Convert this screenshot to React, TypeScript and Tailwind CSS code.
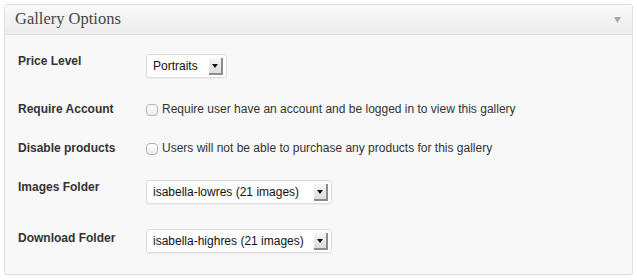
import type { ReactNode } from "react";

const sans = { fontFamily: '"Liberation Sans", Arial, sans-serif' };

function FakeSelect({ value, width }: { value: string; width: string }) {
  return (
    <div
      className={`relative flex h-[24px] items-center rounded-[3px] border border-[#dcdcdc] bg-white pl-[6px] text-[12px] text-[#111] shadow-[0_1px_1px_rgba(0,0,0,0.04)] ${width}`}
    >
      <span className="leading-none">{value}</span>
      <span className="absolute right-[3px] top-[3px] flex h-[17px] w-[14px] items-center justify-center border-b-2 border-r-2 border-b-[#8c8c8c] border-r-[#8c8c8c] bg-gradient-to-b from-[#f6f6f6] to-[#dcdcdc]">
        <svg width="6" height="4" viewBox="0 0 6 4" className="mt-[1px]">
          <path d="M0 0h6L3 4z" fill="#111" />
        </svg>
      </span>
    </div>
  );
}

function Check({ label }: { label: string }) {
  return (
    <label className="flex items-center text-[12px] leading-[16px] text-[#333]">
      <span className="mr-[4px] mt-[2px] h-[12px] w-[12px] rounded-[4px] border border-[#b4b4b4] bg-gradient-to-b from-white to-[#ececec]" />
      {label}
    </label>
  );
}

function Row({ label, height, labelPad, children }: { label: string; height: string; labelPad: string; children: ReactNode }) {
  return (
    <div className={`flex items-start ${height}`}>
      <div className={`w-[128px] shrink-0 text-[12px] font-bold leading-[14px] text-[#333] ${labelPad}`}>{label}</div>
      {children}
    </div>
  );
}

export default function App() {
  return (
    <div className="h-[280px] w-[637px] bg-white p-[4px]" style={sans}>
      <div className="w-[629px] rounded-[3px] border border-[#dfdfdf] bg-[#f8f8f8] shadow-[0_1px_0_rgba(0,0,0,0.03)]">
        <div className="flex h-[30px] items-center justify-between border-b border-[#dfdfdf] bg-gradient-to-b from-[#f9f9f9] to-[#ececec] pl-[10px] pr-[11px]">
          <h3
            className="text-[16.5px] leading-none text-[#464646]"
            style={{ fontFamily: '"Liberation Serif", Georgia, serif' }}
          >
            Gallery Options
          </h3>
          <svg width="7" height="6" viewBox="0 0 7 6">
            <path d="M0 0h7L3.5 6z" fill="#a8a8a8" />
          </svg>
        </div>
        <div className="pb-[21px] pl-[13px] pt-[19px]">
          <Row label="Price Level" height="h-[47px]" labelPad="pt-0">
            <FakeSelect value="Portraits" width="w-[81px]" />
          </Row>
          <Row label="Require Account" height="h-[39px]" labelPad="pt-[1px]">
            <Check label="Require user have an account and be logged in to view this gallery" />
          </Row>
          <Row label="Disable products" height="h-[40px]" labelPad="pt-[1px]">
            <Check label="Users will not be able to purchase any products for this gallery" />
          </Row>
          <Row label="Images Folder" height="h-[49px]" labelPad="pt-0">
            <FakeSelect value="isabella-lowres (21 images)" width="w-[186px]" />
          </Row>
          <Row label="Download Folder" height="h-[24px]" labelPad="pt-[2px]">
            <FakeSelect value="isabella-highres (21 images)" width="w-[186px]" />
          </Row>
        </div>
      </div>
    </div>
  );
}
